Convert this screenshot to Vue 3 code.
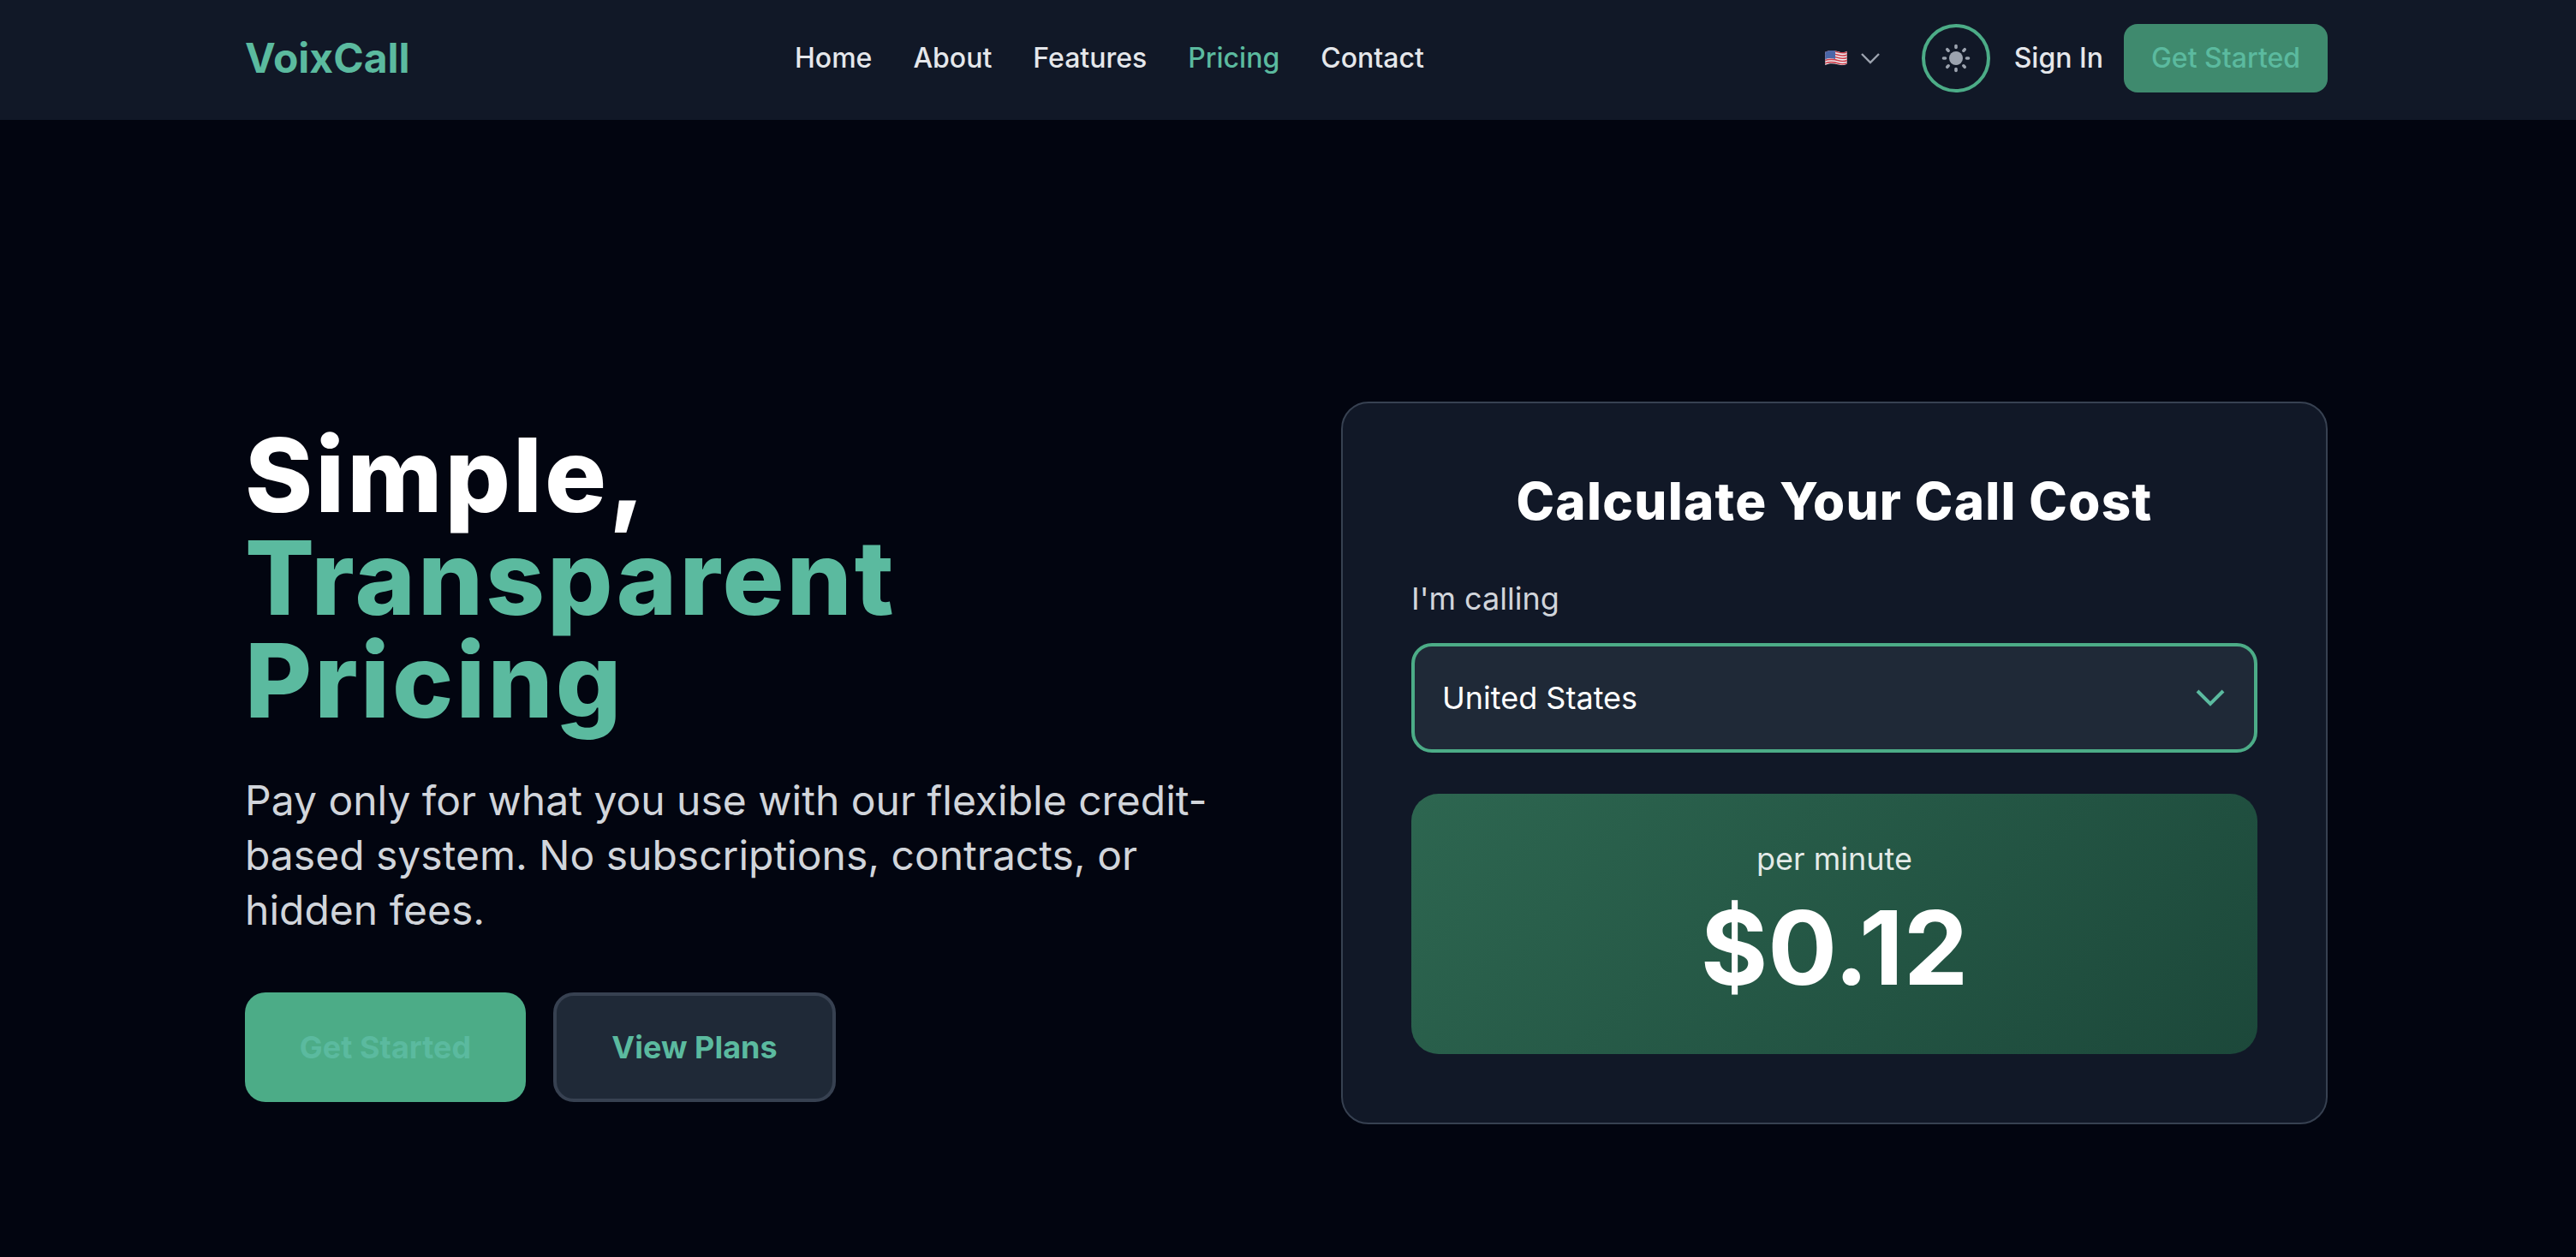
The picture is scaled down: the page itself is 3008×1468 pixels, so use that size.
<script setup>
import { ref } from 'vue'

const links = ['Home', 'About', 'Features', 'Pricing', 'Contact']
const country = ref('United States')
const rays = [0, 45, 90, 135, 180, 225, 270, 315]
</script>

<template>
  <div class="page">
    <header class="navbar">
      <div class="container nav-row">
        <div class="logo">VoixCall</div>
        <nav class="links">
          <a v-for="l in links" :key="l" :class="{ active: l === 'Pricing' }">{{ l }}</a>
        </nav>
        <div class="actions">
          <div class="lang">
            <svg class="flag" width="28" height="22" viewBox="0 0 30 24">
              <clipPath id="wave">
                <path d="M1 4C7 1 13 2 18 3.500C23 5 26 4.500 29 3V19C26 21 22 21.500 17 20C12 18.500 6 18 1 21Z" />
              </clipPath>
              <g clip-path="url(#wave)">
                <rect width="30" height="24" fill="#eceaf0" />
                <g fill="none" stroke="#d0404c" stroke-width="1.700">
                  <path d="M0 4.500C7 2 13 3 18 4.500S26 5.500 30 4" />
                  <path d="M0 8C7 5.500 13 6.500 18 8S26 9 30 7.500" />
                  <path d="M0 11.500C7 9 13 10 18 11.500S26 12.500 30 11" />
                  <path d="M0 15C7 12.500 13 13.500 18 15S26 16 30 14.500" />
                  <path d="M0 18.500C7 16 13 17 18 18.500S26 19.500 30 18" />
                  <path d="M0 22C7 19.500 13 20.500 18 22S26 23 30 21.500" />
                </g>
                <path d="M0 0H14V13C9 11.500 5 11.500 0 14Z" fill="#4a66a8" />
              </g>
            </svg>
            <svg class="chev" width="24" height="14" viewBox="0 0 24 14" fill="none">
              <path d="M2 2l10 10L22 2" stroke="#9ca3af" stroke-width="2.400" />
            </svg>
          </div>
          <button class="theme">
            <svg width="36" height="36" viewBox="0 0 36 36" fill="none">
              <circle cx="18" cy="18" r="8" fill="#9ca3af" />
              <line
                v-for="r in rays"
                :key="r"
                x1="18"
                y1="3.500"
                x2="18"
                y2="5.500"
                stroke="#9ca3af"
                stroke-width="3.600"
                stroke-linecap="round"
                :transform="`rotate(${r} 18 18)`"
              />
            </svg>
          </button>
          <a class="signin">Sign In</a>
          <button class="nav-cta">Get Started</button>
        </div>
      </div>
    </header>

    <main class="container hero">
      <section class="intro">
        <h1>Simple,<br /><span>Transparent<br />Pricing</span></h1>
        <p>Pay only for what you use with our flexible credit-based system. No subscriptions, contracts, or hidden fees.</p>
        <div class="cta-row">
          <button class="btn primary">Get Started</button>
          <button class="btn outline">View Plans</button>
        </div>
      </section>

      <section class="card">
        <h2>Calculate Your Call Cost</h2>
        <label for="country">I'm calling</label>
        <div class="select-wrap">
          <select id="country" v-model="country">
            <option>United States</option>
          </select>
          <svg class="select-chev" width="36" height="22" viewBox="0 0 36 22" fill="none">
            <path d="M3 3l15 15L33 3" stroke="#5bba9f" stroke-width="4" />
          </svg>
        </div>
        <div class="rate">
          <div class="rate-label">per minute</div>
          <div class="rate-value">$0.12</div>
        </div>
      </section>
    </main>
  </div>
</template>

<style scoped>
.page {
  min-height: 1468px;
  font-family: Inter, "Liberation Sans", sans-serif;
  color: #fff;
}
.container {
  width: 2432px;
  margin-left: 286px;
}
.navbar {
  background: #111827;
  height: 140px;
}
.nav-row {
  height: 135px;
  display: flex;
  align-items: center;
}
.logo {
  width: 642px;
  font-size: 48px;
  font-weight: 700;
  color: #5bba9f;
}
.links {
  display: flex;
  gap: 48px;
  font-size: 32px;
  font-weight: 500;
  color: #e5e7eb;
}
.links .active {
  color: #5bba9f;
}
.actions {
  display: flex;
  align-items: center;
  margin-left: auto;
}
.lang {
  display: flex;
  align-items: center;
  gap: 14px;
  margin-right: 48px;
}
.theme {
  width: 80px;
  height: 80px;
  border: 4px solid #4cac87;
  border-radius: 50%;
  background: none;
  padding: 0;
  display: flex;
  align-items: center;
  justify-content: center;
  margin-right: 28px;
}
.signin {
  font-size: 32px;
  font-weight: 500;
  color: #e5e7eb;
  margin-right: 24px;
}
.nav-cta {
  width: 238px;
  height: 80px;
  border: 0;
  border-radius: 16px;
  background: #3f8a6e;
  color: #5bba9f;
  font: 500 32px Inter, sans-serif;
}
.hero {
  display: grid;
  grid-template-columns: 1152px 1152px;
  gap: 128px;
  align-items: center;
  padding-top: 329px;
}
h1 {
  margin: 0;
  font-size: 120px;
  line-height: 120px;
  font-weight: 800;
  color: #fff;
  letter-spacing: 3px;
}
h1 span {
  color: #5bba9f;
}
.intro p {
  margin: 48px 0 0;
  font-size: 48px;
  line-height: 64px;
  color: #d1d5db;
}
.cta-row {
  display: flex;
  gap: 32px;
  margin-top: 64px;
}
.btn {
  font: 700 36px/56px Inter, sans-serif;
  border-radius: 24px;
  color: #5bba9f;
  text-align: center;
}
.primary {
  align-self: stretch;
  width: 328px;
  padding: 32px 0;
  border: 0;
  background: #4cac87;
  display: block;
  vertical-align: top;
}
.outline {
  width: 330px;
  padding: 32px 0;
  border: 4px solid #374151;
  background: #1f2937;
}
.card {
  box-sizing: border-box;
  height: 844px;
  padding: 80px;
  border: 2px solid #374151;
  border-radius: 32px;
  background: #111827;
}
h2 {
  margin: -2px 0 50px;
  font-size: 60px;
  line-height: 72px;
  font-weight: 800;
  text-align: center;
  color: #fff;
  letter-spacing: 1.3px;
}
label {
  display: block;
  font-size: 36px;
  line-height: 56px;
  color: #d1d5db;
  margin-bottom: 24px;
}
.select-wrap {
  position: relative;
}
select {
  box-sizing: border-box;
  width: 100%;
  height: 128px;
  padding: 0 32px;
  appearance: none;
  border: 4px solid #4cac87;
  border-radius: 24px;
  background: #1f2937;
  color: #fff;
  font: 400 36px Inter, sans-serif;
}
.select-chev {
  position: absolute;
  right: 37px;
  top: 53px;
}
.rate {
  margin-top: 48px;
  height: 304px;
  box-sizing: border-box;
  padding-top: 56px;
  border-radius: 32px;
  background: linear-gradient(135deg, #2d6650, #1c483a);
  text-align: center;
}
.rate-label {
  font-size: 36px;
  line-height: 40px;
  color: rgba(255, 255, 255, 0.88);
}
.rate-value {
  font-size: 120px;
  line-height: 120px;
  font-weight: 700;
  margin-top: 24px;
  color: #fff;
}
</style>

<style>
html,
body {
  background: #020510;
}
</style>
